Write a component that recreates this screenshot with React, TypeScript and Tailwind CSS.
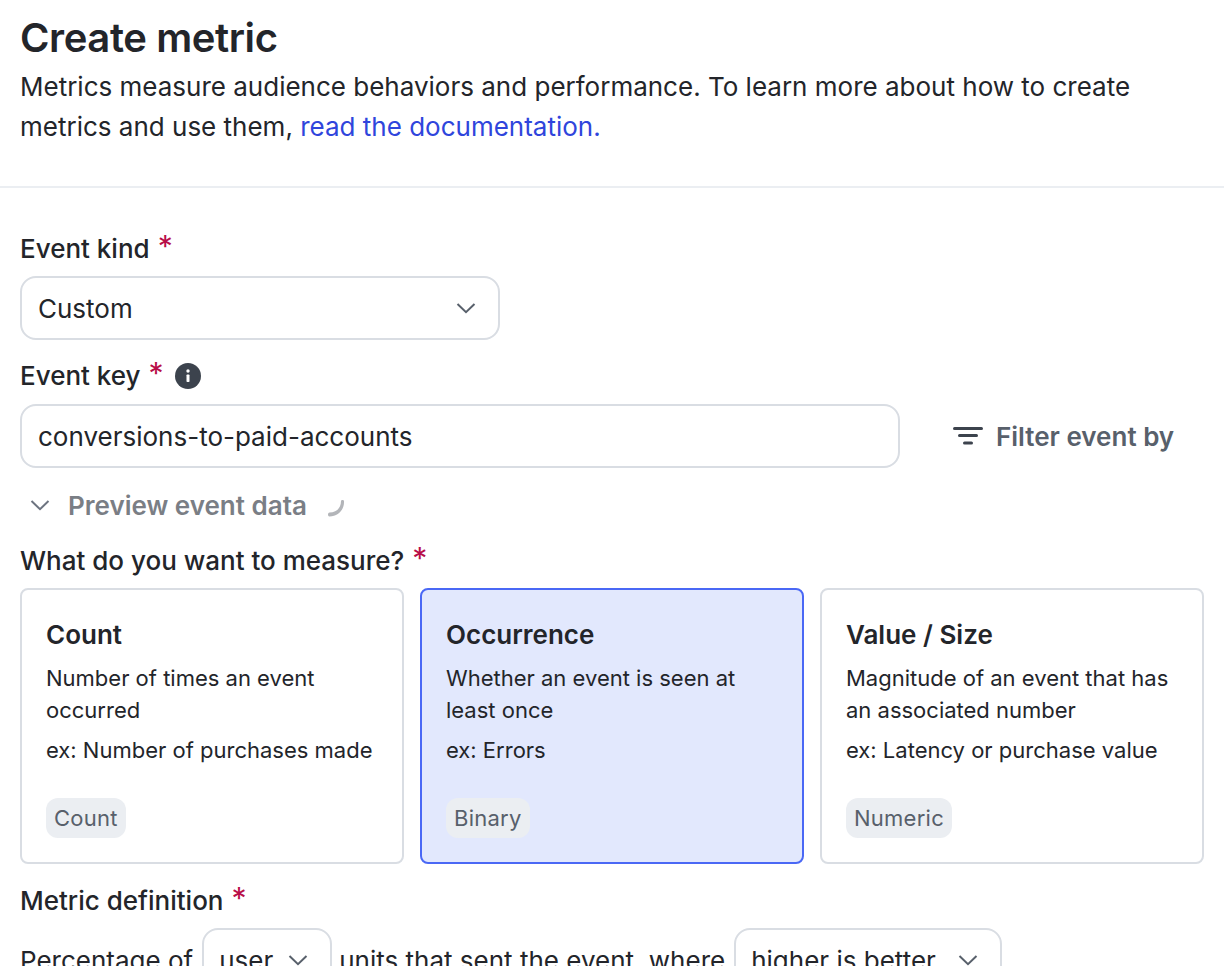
import React from 'react';

const font = { fontFamily: 'Inter, "Liberation Sans", sans-serif' };

function Chevron({ className }: { className?: string }) {
  return (
    <svg viewBox="0 0 20 12" fill="none" className={className}>
      <path d="M1.5 2 L10 10.2 L18.5 2" stroke="currentColor" strokeWidth="2" />
    </svg>
  );
}

function Required() {
  return <span className="ml-[8px] text-[30px] leading-none font-normal text-[#b80d48] relative top-[-3px]">*</span>;
}

function Label({ children, className }: { children: React.ReactNode; className?: string }) {
  return (
    <div className={`flex items-center h-[32px] text-[26px] leading-[32px] font-medium text-[#23252a] ${className ?? ''}`}>
      {children}
    </div>
  );
}

interface CardProps {
  title: string;
  lines: string[];
  example: string;
  tag: string;
  selected?: boolean;
}

function Card({ title, lines, example, tag, selected }: CardProps) {
  return (
    <div
      className={`flex flex-col h-[276px] px-6 pt-[27px] rounded-lg border-2 ${
        selected ? 'bg-[#e2e8fd] border-[#4a68f5]' : 'bg-white border-[#d9dde3]'
      }`}
    >
      <div className="text-[26px] leading-[36px] font-semibold text-[#23252a]">{title}</div>
      <div className="mt-[9px] text-[22px] leading-[32px] text-[#23252a]">
        {lines.map((l) => (
          <div key={l}>{l}</div>
        ))}
      </div>
      <div className="mt-[8px] text-[22px] leading-[32px] text-[#23252a]">{example}</div>
      <div className="mt-auto mb-[24px] self-start h-[40px] px-2 flex items-center rounded-xl bg-[#ebeef2] text-[22px] tracking-[0.25px] text-[#58606b]">
        {tag}
      </div>
    </div>
  );
}

export default function App() {
  return (
    <div className="h-[966px] w-[1224px] overflow-hidden bg-white" style={font}>
      <header className="px-5 pt-[14px] pb-[39px] border-b-2 border-[#ebeef2]">
        <h1 className="text-[40px] leading-[48px] font-semibold tracking-[-0.4px] text-[#23252a]">Create metric</h1>
        <p className="mt-[5px] text-[26px] leading-[40px] text-[#23252a]">
          Metrics measure audience behaviors and performance. To learn more about how to create metrics and use them,{' '}
          <a className="text-[#2f45dc]">read the documentation.</a>
        </p>
      </header>

      <div className="px-5 pt-[44px]">
        <Label className="pt-[1px]">
          Event kind
          <Required />
        </Label>
        <div className="mt-[12px] flex items-center justify-between w-[480px] h-[64px] pl-[16px] pr-[22px] rounded-2xl border-2 border-[#d9dde3] text-[26px] text-[#23252a]">
          Custom
          <Chevron className="w-[20px] h-[12px] text-[#58606b]" />
        </div>

        <Label className="mt-[20px]">
          Event key
          <Required />
          <svg viewBox="0 0 26 26" className="ml-[11px] w-[26px] h-[26px]">
            <circle cx="13" cy="13" r="13" fill="#3c434d" />
            <circle cx="13" cy="8" r="1.7" fill="#fff" />
            <rect x="11.5" y="11.4" width="3" height="7.6" rx="0.8" fill="#fff" />
          </svg>
        </Label>
        <div className="mt-[12px] flex items-center">
          <div className="flex items-center w-[880px] h-[64px] pl-[16px] rounded-2xl border-2 border-[#d9dde3] text-[26px] text-[#23252a]">
            conversions-to-paid-accounts
          </div>
          <div className="ml-[53px] flex items-center gap-[13px] text-[26px] font-semibold text-[#58606b]">
            <svg viewBox="0 0 30 18" className="w-[30px] h-[18px] text-[#3c434d]" fill="currentColor">
              <rect x="0" y="0" width="30" height="3" rx="1.5" />
              <rect x="5" y="7" width="20" height="3" rx="1.5" />
              <rect x="10" y="14.4" width="10" height="3" rx="1.5" />
            </svg>
            Filter event by
          </div>
        </div>

        <div className="mt-[21px] flex items-center h-[32px] pl-[10px] text-[26px] font-semibold text-[#7a7e85]">
          <Chevron className="w-[20px] h-[12px] text-[#6d7480]" />
          <span className="ml-[18px]">Preview event data</span>
          <svg viewBox="0 0 20 22" className="ml-[19px] w-[20px] h-[22px] relative top-[1px]">
            <path
              d="M15 6 C15 13 10.5 17.5 3.5 17.5 C1.5 17.5 1.5 21.8 3.5 21.5 C13 21 18.5 14 18 6 C18 4.5 15 4.5 15 6 Z"
              fill="#b3b5b9"
            />
          </svg>
        </div>

        <Label className="mt-[24px]">
          What do you want to measure?
          <Required />
        </Label>
        <div className="mt-[11px] grid grid-cols-3 gap-4">
          <Card
            title="Count"
            lines={['Number of times an event', 'occurred']}
            example="ex: Number of purchases made"
            tag="Count"
          />
          <Card
            selected
            title="Occurrence"
            lines={['Whether an event is seen at', 'least once']}
            example="ex: Errors"
            tag="Binary"
          />
          <Card
            title="Value / Size"
            lines={['Magnitude of an event that has', 'an associated number']}
            example="ex: Latency or purchase value"
            tag="Numeric"
          />
        </div>

        <Label className="mt-[21px]">
          Metric definition
          <Required />
        </Label>
        <div className="mt-[11px] flex items-center text-[26px] text-[#23252a]">
          Percentage of
          <div className="ml-[9px] flex items-center w-[130px] h-[64px] pl-[15px] pr-[22px] justify-between rounded-2xl border-2 border-[#d9dde3]">
            user
            <Chevron className="w-[20px] h-[12px] text-[#58606b]" />
          </div>
          <span className="ml-[7px]">units that sent the event, where</span>
          <div className="ml-[9px] flex items-center w-[268px] h-[64px] pl-[15px] pr-[22px] justify-between rounded-2xl border-2 border-[#d9dde3]">
            higher is better
            <Chevron className="w-[20px] h-[12px] text-[#58606b]" />
          </div>
        </div>
      </div>
    </div>
  );
}
